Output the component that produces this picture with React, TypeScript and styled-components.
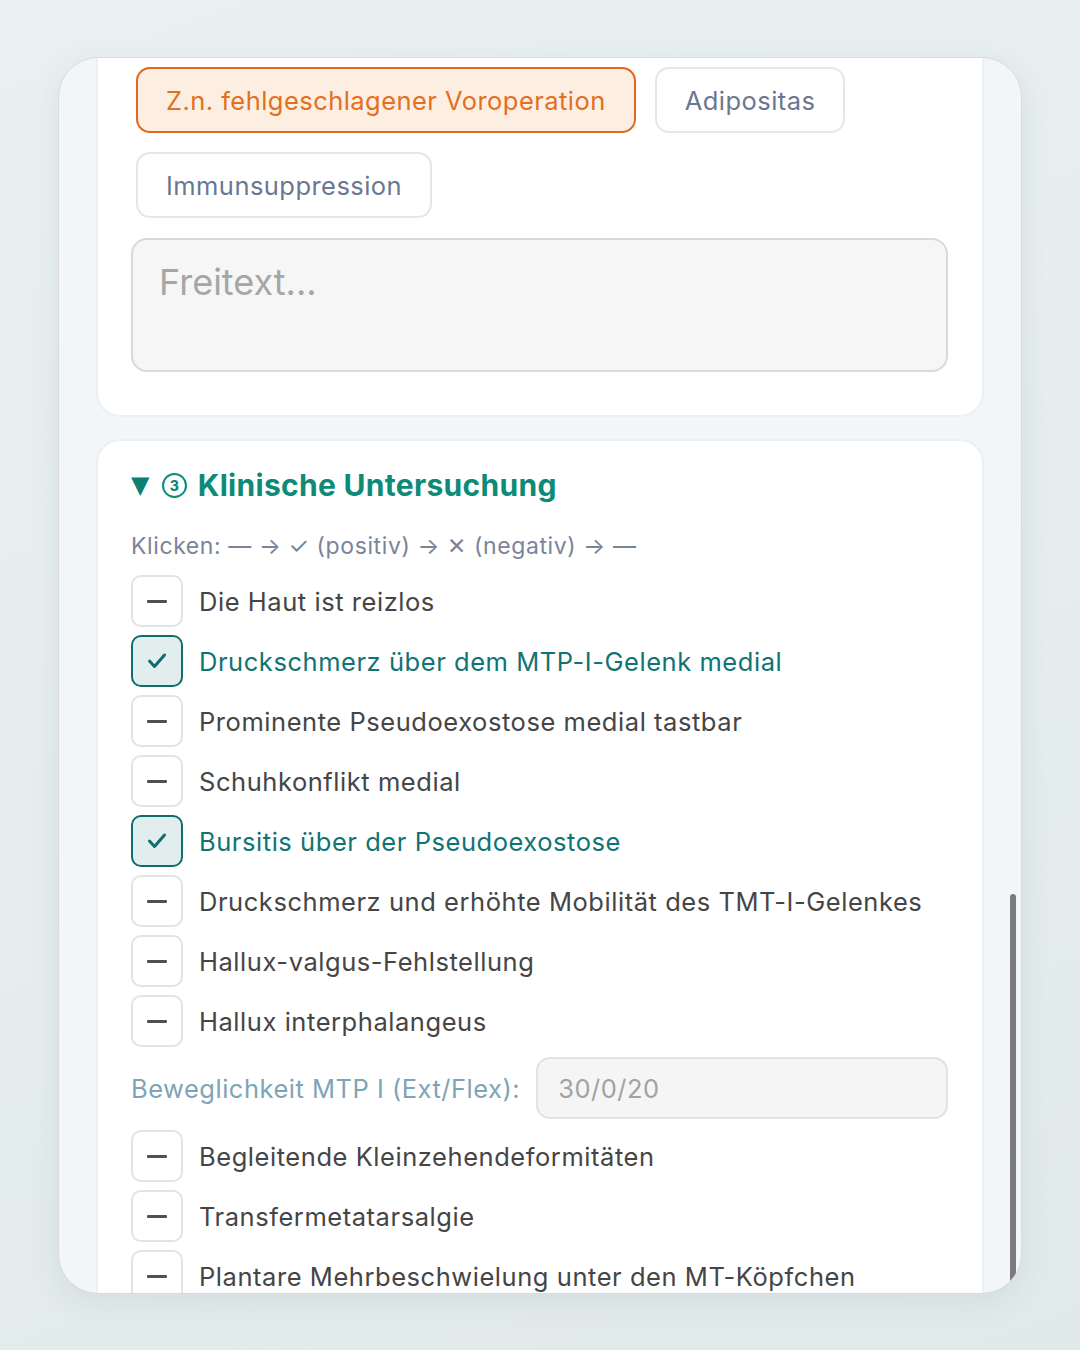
import * as React from "react";
import styled, { createGlobalStyle } from "styled-components";

const GlobalStyle = createGlobalStyle`
  html, body {
    margin: 0;
    padding: 0;
  }
  body {
    width: 1080px;
    height: 1350px;
    background: linear-gradient(160deg, #e9f0f1 0%, #e1eaeb 100%);
    font-family: Inter, "Noto Sans", "DejaVu Sans", sans-serif;
    -webkit-font-smoothing: antialiased;
  }
`;

const Page = styled.div`
  width: 1080px;
  height: 1350px;
  padding: 57px 58px 0 58px;
  box-sizing: border-box;
`;

const Frame = styled.div`
  position: relative;
  height: 1235px;
  border: 1px solid #d5dcde;
  border-radius: 40px;
  background: #f3f6f8;
  overflow: hidden;
  padding: 0 37px;
  box-shadow: 0 8px 30px rgba(40, 70, 80, 0.08);
`;

const Card = styled.section<{ $top?: number }>`
  background: #ffffff;
  border: 2px solid #edf0f2;
  border-radius: 24px;
  margin-top: ${(p) => p.$top ?? 22}px;
  padding: 33px 34px 43px 33px;
`;

const ChipWrap = styled.div`
  display: flex;
  flex-wrap: wrap;
  gap: 19px 19px;
  padding-left: 5px;
`;

const Chip = styled.button<{ $active?: boolean }>`
  height: 66px;
  padding: 0 28px;
  border-radius: 14px;
  border: 2px solid ${(p) => (p.$active ? "#e2661c" : "#e4e6e8")};
  background: ${(p) => (p.$active ? "#fdeee2" : "#ffffff")};
  color: ${(p) => (p.$active ? "#e2701f" : "#6a7790")};
  font-family: Inter, sans-serif;
  font-size: 25.5px;
  letter-spacing: 0.45px;
  cursor: pointer;
`;

const FreeText = styled.textarea`
  display: block;
  width: 100%;
  box-sizing: border-box;
  height: 134px;
  margin-top: 20px;
  padding: 20px 26px;
  border: 2px solid #d9d9d9;
  border-radius: 16px;
  background: #f6f6f6;
  font-family: Inter, sans-serif;
  font-size: 36px;
  resize: none;
  &::placeholder {
    color: #a6a6a6;
  }
`;

const Title = styled.h2`
  display: flex;
  align-items: center;
  height: 36px;
  margin: -7px 0 0 0;
  font-size: 30px;
  font-weight: 700;
  color: #0e8a78;
  letter-spacing: 0.3px;
`;

const Triangle = styled.span`
  font-size: 24px;
  color: #0e7f72;
  font-family: "DejaVu Sans", sans-serif;
  margin-right: 12px;
`;

const StepBadge = styled.span`
  flex: none;
  width: 25px;
  height: 25px;
  box-sizing: border-box;
  border: 2.5px solid #0e8a78;
  border-radius: 50%;
  display: inline-flex;
  align-items: center;
  justify-content: center;
  font-size: 14px;
  font-weight: 800;
  letter-spacing: 0;
  margin-right: 11px;
`;

const Hint = styled.p`
  margin: 29px 0 15px 0;
  font-size: 23px;
  color: #7a8499;
  letter-spacing: 0.6px;
`;

const List = styled.div`
  display: flex;
  flex-direction: column;
  gap: 8px;
`;

const Row = styled.div<{ $on?: boolean }>`
  display: flex;
  align-items: center;
  gap: 16px;
  font-size: 25.5px;
  letter-spacing: 0.55px;
  color: ${(p) => (p.$on ? "#0f7474" : "#454545")};
`;

const Box = styled.span<{ $on?: boolean }>`
  flex: none;
  width: 52px;
  height: 52px;
  box-sizing: border-box;
  border-radius: 10px;
  border: 2px solid ${(p) => (p.$on ? "#0f6d6d" : "#e3e3e3")};
  background: ${(p) => (p.$on ? "#e2eeee" : "#ffffff")};
  display: flex;
  align-items: center;
  justify-content: center;
`;

const Dash = styled.span`
  width: 20px;
  height: 3px;
  border-radius: 1px;
  background: #505050;
`;

const FieldRow = styled.div`
  display: flex;
  align-items: center;
  gap: 16px;
  margin: 2px 0 3px 0;
`;

const FieldLabel = styled.label`
  flex: none;
  font-size: 25.5px;
  letter-spacing: 0.5px;
  color: #7fa4b7;
`;

const FieldInput = styled.input`
  flex: 1;
  min-width: 0;
  height: 62px;
  box-sizing: border-box;
  padding: 0 20px;
  border: 2px solid #e2e2e2;
  border-radius: 14px;
  background: #f5f5f5;
  font-family: Inter, sans-serif;
  font-size: 25.5px;
  letter-spacing: 0.5px;
  color: #a2a2a2;
`;

const Scrollbar = styled.div`
  position: absolute;
  right: 5px;
  bottom: 2px;
  width: 6px;
  height: 397px;
  border-radius: 3px;
  background: #7b7b7f;
`;

const Check = () => (
  <svg width="20" height="18" viewBox="0 0 20 18" fill="none">
    <polyline
      points="2.5,9 7.5,14.5 17.5,3"
      stroke="#0f6d6d"
      strokeWidth="3"
      strokeLinecap="round"
      strokeLinejoin="round"
    />
  </svg>
);

type Item = { label: string; on?: boolean };

const first: Item[] = [
  { label: "Die Haut ist reizlos" },
  { label: "Druckschmerz über dem MTP-I-Gelenk medial", on: true },
  { label: "Prominente Pseudoexostose medial tastbar" },
  { label: "Schuhkonflikt medial" },
  { label: "Bursitis über der Pseudoexostose", on: true },
  { label: "Druckschmerz und erhöhte Mobilität des TMT-I-Gelenkes" },
  { label: "Hallux-valgus-Fehlstellung" },
  { label: "Hallux interphalangeus" },
];

const second: Item[] = [
  { label: "Begleitende Kleinzehendeformitäten" },
  { label: "Transfermetatarsalgie" },
  { label: "Plantare Mehrbeschwielung unter den MT-Köpfchen" },
];

const Finding: React.FC<Item> = ({ label, on }) => (
  <Row $on={on}>
    <Box $on={on}>{on ? <Check /> : <Dash />}</Box>
    <span>{label}</span>
  </Row>
);

export default function App() {
  return (
    <>
      <GlobalStyle />
      <Page>
        <Frame>
          <Card $top={-26}>
            <ChipWrap>
              <Chip $active>Z.n. fehlgeschlagener Voroperation</Chip>
              <Chip>Adipositas</Chip>
              <Chip>Immunsuppression</Chip>
            </ChipWrap>
            <FreeText placeholder="Freitext..." />
          </Card>
          <Card>
            <Title>
              <Triangle>▼</Triangle>
              <StepBadge>3</StepBadge>
              <span>Klinische Untersuchung</span>
            </Title>
            <Hint>Klicken: — → ✓ (positiv) → ✕ (negativ) → —</Hint>
            <List>
              {first.map((it) => (
                <Finding key={it.label} {...it} />
              ))}
              <FieldRow>
                <FieldLabel>Beweglichkeit MTP I (Ext/Flex):</FieldLabel>
                <FieldInput defaultValue="30/0/20" />
              </FieldRow>
              {second.map((it) => (
                <Finding key={it.label} {...it} />
              ))}
            </List>
          </Card>
          <Scrollbar />
        </Frame>
      </Page>
    </>
  );
}
